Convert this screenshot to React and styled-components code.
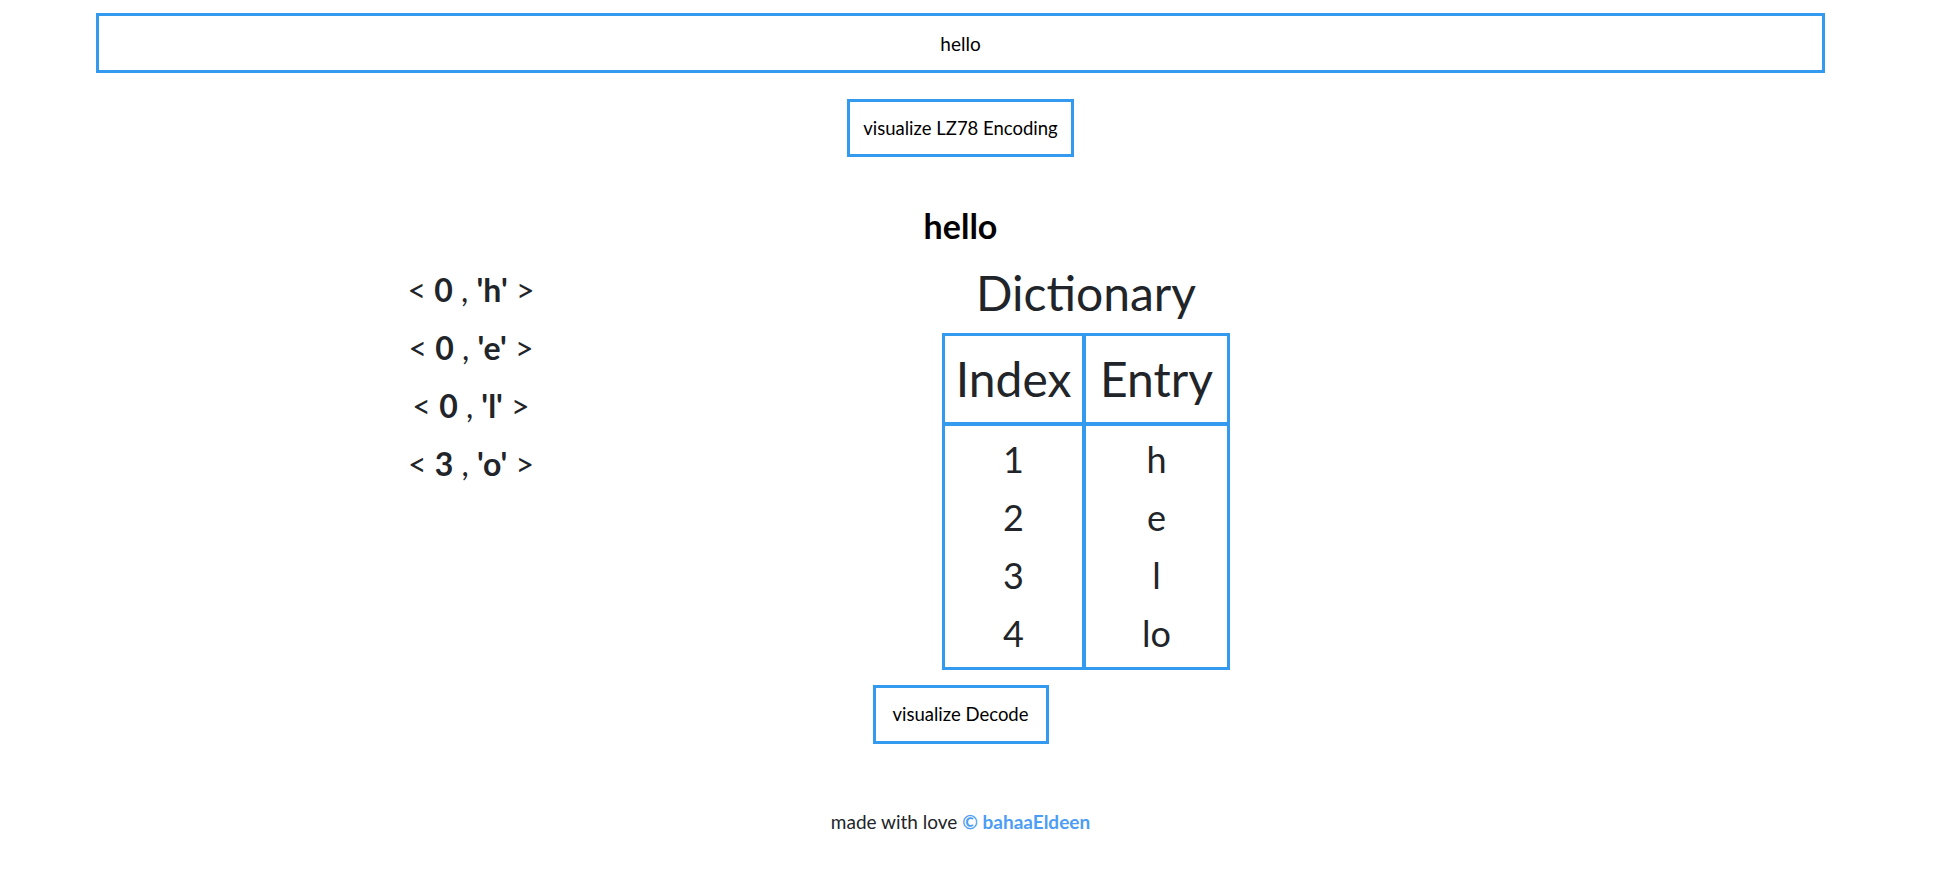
import React from 'react'
import styled, { createGlobalStyle } from 'styled-components'

const blue = '#339af0'
const ink = '#212529'
const font = `Lato, "Noto Sans", sans-serif`

const GlobalStyle = createGlobalStyle`
  body {
    margin: 0;
    background: #fff;
    font-family: ${font};
    color: ${ink};
  }
`

const Page = styled.main`
  width: calc(100vw - 17px);
  display: flex;
  flex-direction: column;
  align-items: center;
  padding-top: 13px;
`

const TextInput = styled.input`
  box-sizing: border-box;
  width: 90%;
  height: 60px;
  border: 3px solid ${blue};
  outline: none;
  text-align: center;
  font-family: ${font};
  font-size: 19px;
  color: #000;
  background: #fff;
`

const Button = styled.button`
  box-sizing: border-box;
  height: ${({ $tall }) => ($tall ? '59px' : '58px')};
  margin-top: ${({ $top }) => $top}px;
  padding: 0 ${({ $pad }) => $pad}px;
  border: 3px solid ${blue};
  background: #fff;
  font-family: ${font};
  font-size: 18.5px;
  color: #000;
  cursor: pointer;
`

const Word = styled.h2`
  margin: 49px 0 0;
  font-size: 34px;
  line-height: 1.2;
  font-weight: 700;
  color: #000;
`

const Columns = styled.section`
  width: 100%;
  display: grid;
  grid-template-columns: 942px 1fr;
`

const Tuples = styled.div`
  display: flex;
  flex-direction: column;
  align-items: center;
  padding-top: 22px;
`

const Tuple = styled.p`
  margin: 0 0 16px;
  font-size: 32px;
  line-height: 42px;

  b {
    font-weight: 700;
  }
`

const DictionaryBox = styled.div`
  display: inline-flex;
  flex-direction: column;
  align-items: center;
  justify-self: start;
  margin-top: 17px;
`

const DictTitle = styled.h3`
  margin: 0 0 12px;
  font-size: 48px;
  line-height: 1.2;
  font-weight: 400;
  color: ${ink};
`

const Table = styled.table`
  border: 3px solid ${blue};
  border-collapse: collapse;
  table-layout: fixed;
`

const HeadCell = styled.th`
  width: ${({ $w }) => $w}px;
  padding: 14px 0;
  font-size: 48px;
  line-height: 1.2;
  font-weight: 400;
  text-align: center;
  border-bottom: 4px solid ${blue};
  border-left: ${({ $split }) => ($split ? `4px solid ${blue}` : 'none')};
`

const Row = styled.tr`
  &:first-child td {
    padding-top: 4px;
  }
  &:last-child td {
    padding-bottom: 5px;
  }
`

const Cell = styled.td`
  padding: 0;
  font-size: 36px;
  line-height: 58px;
  text-align: center;
  border-left: ${({ $split }) => ($split ? `4px solid ${blue}` : 'none')};
`

const Footer = styled.footer`
  margin-top: 67px;
  font-size: 19px;
  line-height: 1.2;
  color: ${ink};
`

const Credit = styled.span`
  color: #4c9df5;
  font-weight: 700;
`

const encoded = [
  { index: 0, char: 'h' },
  { index: 0, char: 'e' },
  { index: 0, char: 'l' },
  { index: 3, char: 'o' },
]

const dictionary = ['h', 'e', 'l', 'lo']

const App = () => (
  <>
    <GlobalStyle />
    <Page>
      <TextInput value="hello" readOnly />
      <Button $top={26} $pad={13}>visualize LZ78 Encoding</Button>
      <Word>hello</Word>
      <Columns>
        <Tuples>
          {encoded.map((t, i) => (
            <Tuple key={i}>
              &lt; <b>{t.index}</b> , <b>'{t.char}'</b> &gt;
            </Tuple>
          ))}
        </Tuples>
        <DictionaryBox>
          <DictTitle>Dictionary</DictTitle>
          <Table>
            <thead>
              <tr>
                <HeadCell $w={137}>Index</HeadCell>
                <HeadCell $w={141} $split>Entry</HeadCell>
              </tr>
            </thead>
            <tbody>
              {dictionary.map((entry, i) => (
                <Row key={entry}>
                  <Cell>{i + 1}</Cell>
                  <Cell $split>{entry}</Cell>
                </Row>
              ))}
            </tbody>
          </Table>
        </DictionaryBox>
      </Columns>
      <Button $top={15} $pad={17} $tall>visualize Decode</Button>
      <Footer>
        made with love <Credit>© bahaaEldeen</Credit>
      </Footer>
    </Page>
  </>
)

export default App
